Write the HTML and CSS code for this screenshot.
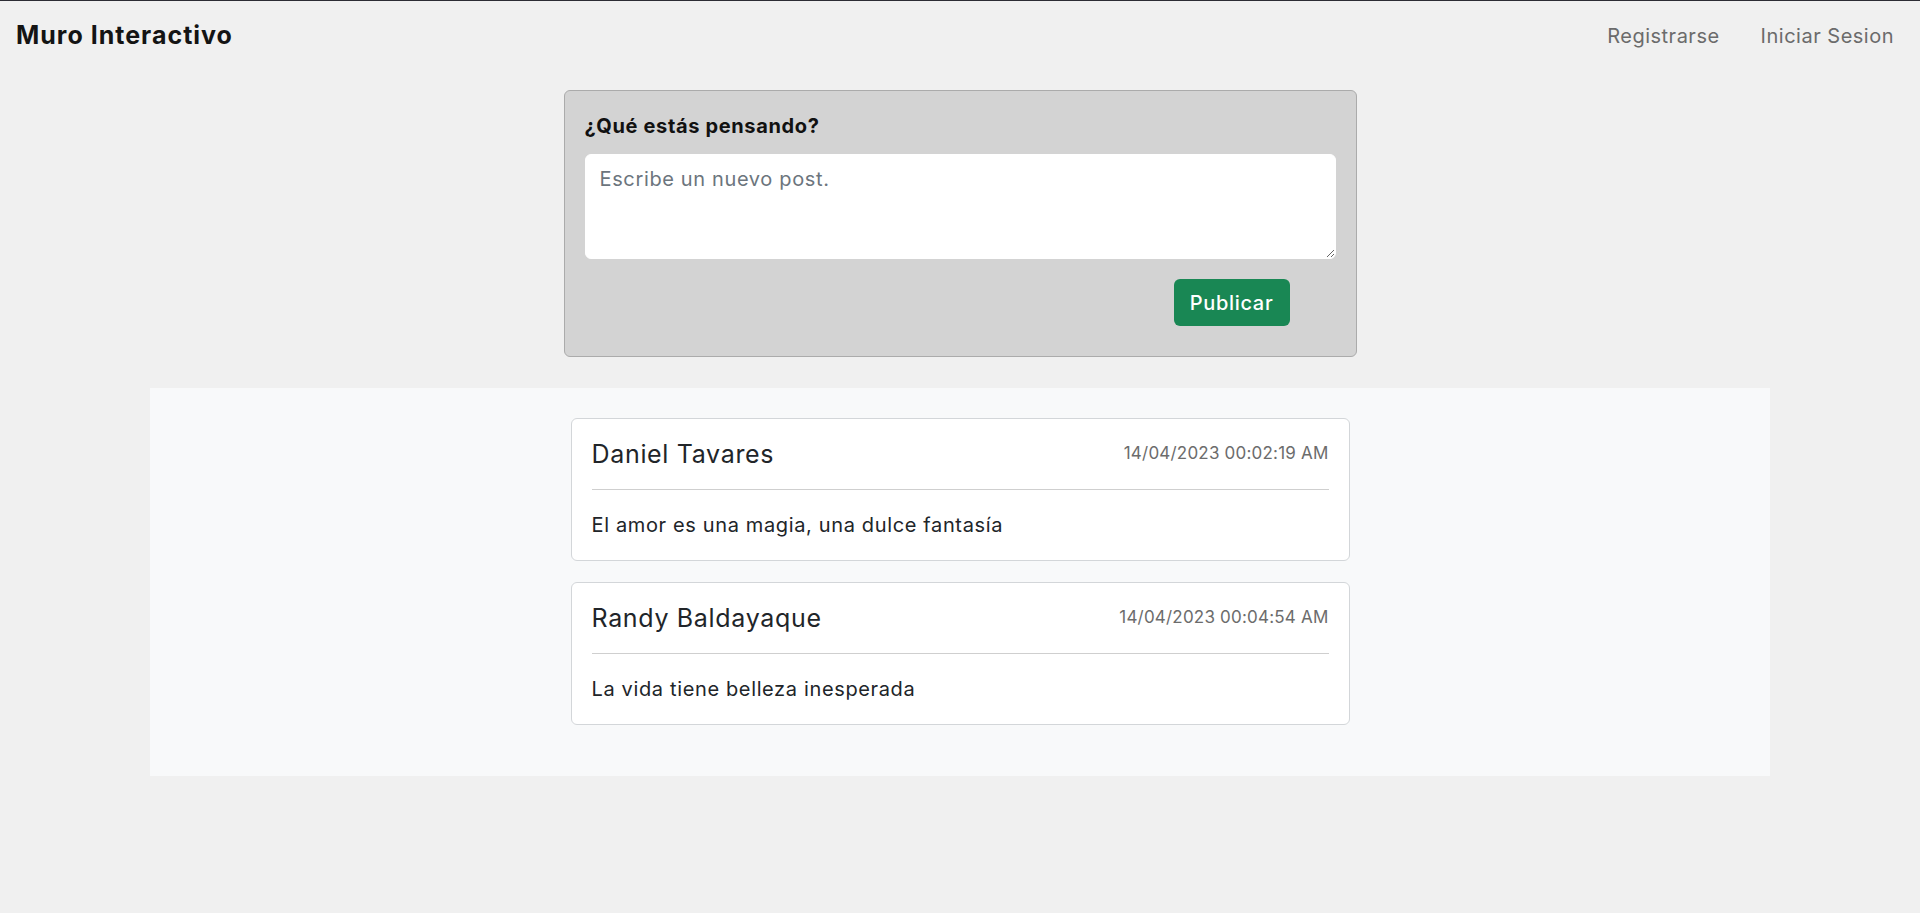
FILE: index.html
```html
<!DOCTYPE html>
<html lang="es">
<head>
<meta charset="utf-8">
<title>Muro Interactivo</title>
<link rel="stylesheet" href="styles.css">
</head>
<body>
<header class="topbar">
  <div class="brand">Muro Interactivo</div>
  <nav class="nav">
    <a class="nav-link" href="#">Registrarse</a>
    <a class="nav-link" href="#">Iniciar Sesion</a>
  </nav>
</header>
<main class="page">
  <form class="composer">
    <label class="composer-title" for="post">¿Qué estás pensando?</label>
    <textarea id="post" class="composer-input" placeholder="Escribe un nuevo post."></textarea>
    <div class="composer-actions">
      <button type="button" class="btn-publish">Publicar</button>
    </div>
  </form>
  <section class="feed">
    <article class="post">
      <div class="post-head">
        <h4 class="post-author">Daniel Tavares</h4>
        <span class="post-date">14/04/2023 00:02:19 AM</span>
      </div>
      <hr class="post-rule">
      <p class="post-body">El amor es una magia, una dulce fantasía</p>
    </article>
    <article class="post">
      <div class="post-head">
        <h4 class="post-author">Randy Baldayaque</h4>
        <span class="post-date">14/04/2023 00:04:54 AM</span>
      </div>
      <hr class="post-rule">
      <p class="post-body">La vida tiene belleza inesperada</p>
    </article>
  </section>
</main>
</body>
</html>
```

FILE: styles.css
```css
* { box-sizing: border-box; }
html, body { height: 100%; }
body {
  margin: 0;
  background: #f0f0f0;
  border-top: 1px solid #2c2c34;
  font-family: Inter, "Open Sans", sans-serif;
  color: #212529;
  font-size: 20px;
  line-height: 1.5;
  letter-spacing: 0.032em;
}
.topbar {
  display: flex;
  justify-content: space-between;
  align-items: center;
  height: 70px;
  padding: 0 26px 0 16px;
}
.brand {
  font-size: 25px;
  font-weight: 700;
  color: #141414;
  letter-spacing: 0.04em;
}
.nav { display: flex; gap: 41px; }
.nav-link {
  color: #6b6b6b;
  text-decoration: none;
  font-size: 20px;
  letter-spacing: 0.025em;
}
.page { display: flex; flex-direction: column; align-items: center; padding-top: 19px; }
.composer {
  width: 793px;
  background: #d3d3d3;
  border: 1px solid #ababab;
  border-radius: 6px;
  padding: 20px 20px 30px;
  display: flex;
  flex-direction: column;
}
.composer-title {
  font-weight: 700;
  font-size: 20px;
  line-height: 30px;
  margin-bottom: 13px;
  color: #111;
}
.composer-input {
  height: 105px;
  width: 100%;
  border: 1px solid #fff;
  border-radius: 6px;
  background: #fff;
  padding: 9px 14px;
  font: inherit;
  font-size: 20px;
  line-height: 30px;
  letter-spacing: 0.032em;
  color: #212529;
  resize: vertical;
}
.composer-input::placeholder { color: #6c757d; }
.composer-actions {
  display: flex;
  justify-content: flex-end;
  padding-right: 46px;
  margin-top: 20px;
}
.btn-publish {
  height: 47px;
  width: 116px;
  background: #198754;
  color: #fff;
  border: none;
  border-radius: 6px;
  font: inherit;
  font-size: 20px;
  font-weight: 500;
  letter-spacing: 0.035em;
}
.feed {
  width: 1620px;
  margin-top: 31px;
  background: #f8f9fa;
  padding: 30px 0 51px;
  display: flex;
  flex-direction: column;
  align-items: center;
  gap: 21px;
}
.post {
  width: 779px;
  background: #fff;
  border: 1px solid #d3d6d9;
  border-radius: 6px;
  padding: 20px 20px 20px;
}
.post-head {
  display: flex;
  justify-content: space-between;
  align-items: center;
}
.post-author {
  margin: 0;
  font-size: 25px;
  font-weight: 400;
  line-height: 30px;
  letter-spacing: 0.027em;
}
.post-date { font-size: 17px; color: #6c6c6c; letter-spacing: 0.012em; }
.post-rule {
  margin: 20px 0;
  border: 0;
  border-top: 1px solid #cfcfcf;
}
.post-body { margin: 0; font-size: 20px; line-height: 30px; }
```
